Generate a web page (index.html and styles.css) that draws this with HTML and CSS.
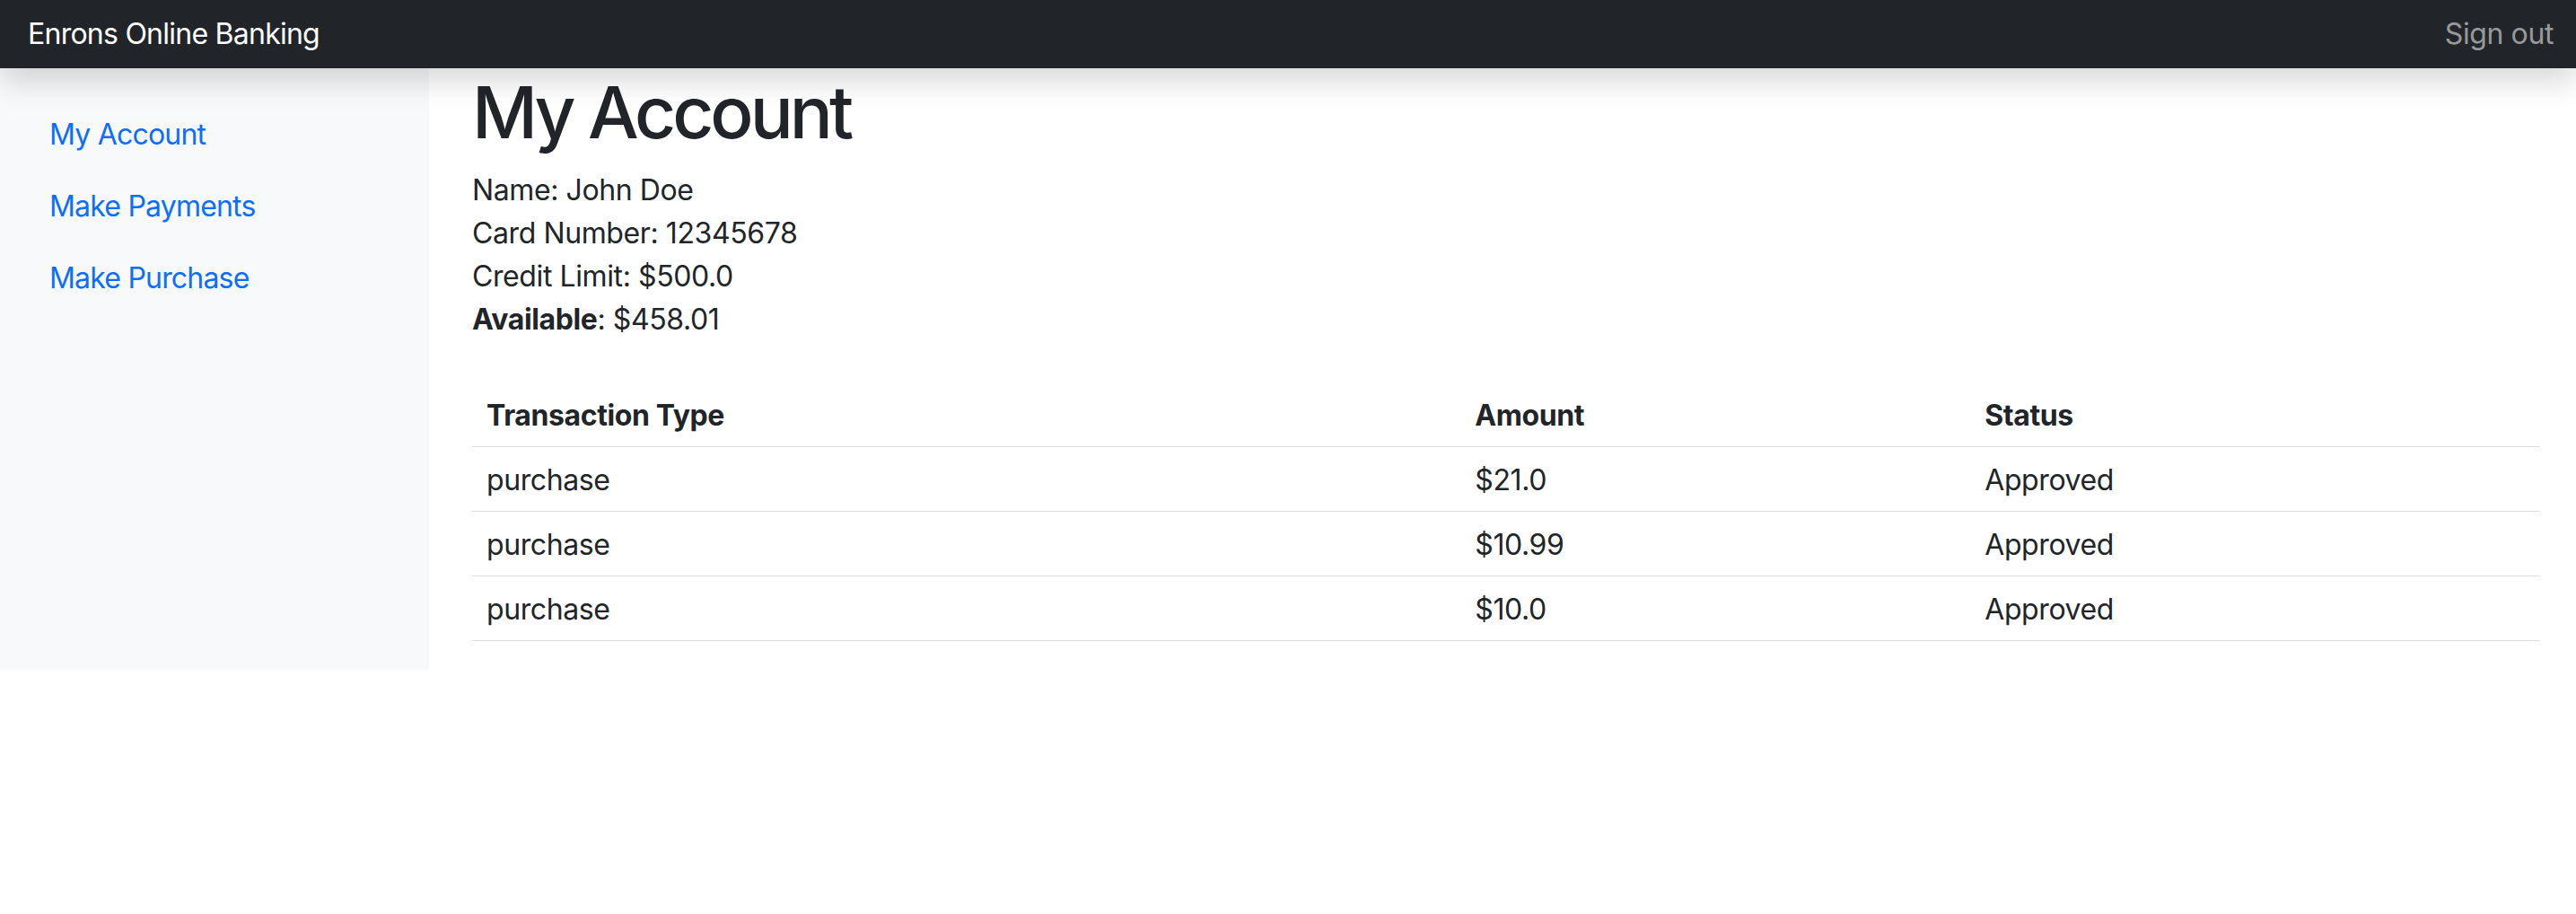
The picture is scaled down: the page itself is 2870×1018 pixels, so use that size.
FILE: index.html
```html
<!DOCTYPE html>
<html lang="en">
<head>
<meta charset="utf-8">
<title>Enrons Online Banking</title>
<link rel="stylesheet" href="styles.css">
</head>
<body>
<header class="navbar">
  <a class="brand" href="#">Enrons Online Banking</a>
  <a class="signout" href="#">Sign out</a>
</header>
<div class="layout">
  <nav class="sidebar">
    <ul class="side-nav">
      <li><a class="side-link" href="#">My Account</a></li>
      <li><a class="side-link" href="#">Make Payments</a></li>
      <li><a class="side-link" href="#">Make Purchase</a></li>
    </ul>
  </nav>
  <main class="main">
    <h1 class="title">My Account</h1>
    <div class="info">
      <div class="info-line">Name: John Doe</div>
      <div class="info-line">Card Number: 12345678</div>
      <div class="info-line">Credit Limit: $500.0</div>
      <div class="info-line"><strong>Available</strong>: $458.01</div>
    </div>
    <table class="tx-table">
      <thead>
        <tr>
          <th class="col-type">Transaction Type</th>
          <th class="col-amount">Amount</th>
          <th class="col-status">Status</th>
        </tr>
      </thead>
      <tbody>
        <tr><td>purchase</td><td>$21.0</td><td>Approved</td></tr>
        <tr><td>purchase</td><td>$10.99</td><td>Approved</td></tr>
        <tr><td>purchase</td><td>$10.0</td><td>Approved</td></tr>
      </tbody>
    </table>
  </main>
</div>
</body>
</html>
```
FILE: styles.css
```css
* { box-sizing: border-box; }

html, body {
  margin: 0;
  padding: 0;
  background: #fff;
}

body {
  font-family: Inter, "Noto Sans", "Liberation Sans", sans-serif;
  font-size: 32px;
  line-height: 1.5;
  color: #212529;
  letter-spacing: -0.4px;
}

.navbar {
  position: relative;
  z-index: 10;
  height: 76px;
  background: #212529;
  display: flex;
  align-items: center;
  justify-content: space-between;
  box-shadow: 0 16px 32px rgba(0, 0, 0, 0.15);
}

.brand {
  color: #fff;
  text-decoration: none;
  padding: 0 32px 0 31px;
  font-size: 32px;
  letter-spacing: -0.75px;
}

.signout {
  color: rgba(255, 255, 255, 0.55);
  text-decoration: none;
  padding: 0 25px 0 32px;
}

.layout {
  display: flex;
}

.sidebar {
  width: 478px;
  flex: 0 0 478px;
  background: #f8f9fa;
  padding: 34px 24px 0 23px;
}

.side-nav {
  list-style: none;
  margin: 0;
  padding: 0;
}

.side-link {
  display: block;
  padding: 16px 32px;
  color: #0d6efd;
  text-decoration: none;
  letter-spacing: -0.8px;
}

.main {
  flex: 1;
  padding: 0 40px 0 48px;
}

.title {
  margin: 1px 0 15px;
  font-size: 80px;
  font-weight: 500;
  line-height: 1.2;
  letter-spacing: -4px;
}

.info {
  margin-bottom: 46px;
}

.info strong {
  font-weight: 700;
}

.tx-table {
  width: 100%;
  border-collapse: collapse;
  margin-bottom: 32px;
}

.tx-table th,
.tx-table td {
  text-align: left;
  padding: 13px 16px 10px;
  border-bottom: 1px solid #dee2e6;
  vertical-align: bottom;
}

.tx-table th {
  font-weight: 700;
}

.col-type { width: 47.8%; }
.col-amount { width: 24.65%; }
.col-status { width: 27.55%; }
```
